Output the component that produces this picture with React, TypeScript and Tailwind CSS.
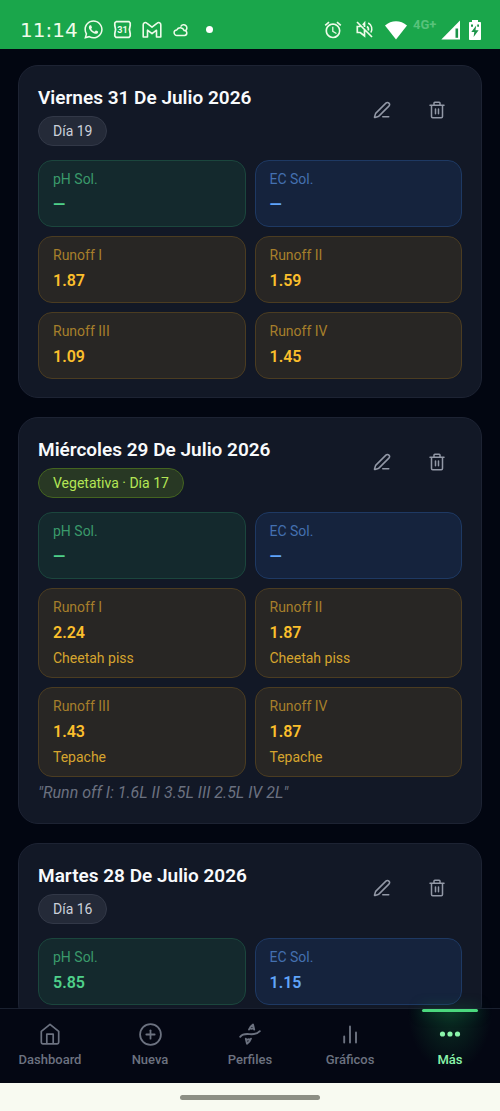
import React from 'react';
import { FaWhatsapp } from 'react-icons/fa';
import { MdAlarm } from 'react-icons/md';
import { CirclePlus, PenLine } from 'lucide-react';

type Tone = 'green' | 'blue' | 'amber';

interface Reading {
  label: string;
  value: string;
  tone: Tone;
  note?: string;
}

interface Entry {
  title: string;
  stage: string;
  vegetative?: boolean;
  readings: Reading[];
  comment?: string;
}

const entries: Entry[] = [
  {
    title: 'Viernes 31 De Julio 2026',
    stage: 'Día 19',
    readings: [
      { label: 'pH Sol.', value: '—', tone: 'green' },
      { label: 'EC Sol.', value: '—', tone: 'blue' },
      { label: 'Runoff I', value: '1.87', tone: 'amber' },
      { label: 'Runoff II', value: '1.59', tone: 'amber' },
      { label: 'Runoff III', value: '1.09', tone: 'amber' },
      { label: 'Runoff IV', value: '1.45', tone: 'amber' },
    ],
  },
  {
    title: 'Miércoles 29 De Julio 2026',
    stage: 'Vegetativa · Día 17',
    vegetative: true,
    readings: [
      { label: 'pH Sol.', value: '—', tone: 'green' },
      { label: 'EC Sol.', value: '—', tone: 'blue' },
      { label: 'Runoff I', value: '2.24', tone: 'amber', note: 'Cheetah piss' },
      { label: 'Runoff II', value: '1.87', tone: 'amber', note: 'Cheetah piss' },
      { label: 'Runoff III', value: '1.43', tone: 'amber', note: 'Tepache' },
      { label: 'Runoff IV', value: '1.87', tone: 'amber', note: 'Tepache' },
    ],
    comment: '"Runn off I: 1.6L II 3.5L III 2.5L IV 2L"',
  },
  {
    title: 'Martes 28 De Julio 2026',
    stage: 'Día 16',
    readings: [
      { label: 'pH Sol.', value: '5.85', tone: 'green' },
      { label: 'EC Sol.', value: '1.15', tone: 'blue' },
    ],
  },
];

const tones: Record<Tone, { box: string; label: string; value: string }> = {
  green: { box: 'border-[#1b463d] bg-[#14292d]', label: 'text-[#3a9a6b]', value: 'text-[#4fd08a]' },
  blue: { box: 'border-[#1e3963] bg-[#15233d]', label: 'text-[#4470b0]', value: 'text-[#60a5fa]' },
  amber: { box: 'border-[#4b3c21] bg-[#282624]', label: 'text-[#a67f2b]', value: 'text-[#fbbf2c]' },
};

function TrashIcon() {
  return (
    <svg width="20" height="20" viewBox="0 0 20 20" fill="none" stroke="currentColor" strokeWidth="1.5" strokeLinejoin="round" strokeLinecap="round" aria-hidden="true">
      <path d="M3 5.300h14M4.500 5.300v11.200c0 .8.4 1.200 1.200 1.200h8.600c.8 0 1.200-.4 1.200-1.200V5.300M7 5.300V3.100c0-.6.300-.9.9-.9h4.200c.6 0 .9.300.9.9v2.200M8.500 9v4.800M11.500 9v4.800" />
    </svg>
  );
}

function HomeIcon() {
  return (
    <svg width="24" height="24" viewBox="0 0 24 24" fill="none" stroke="currentColor" strokeWidth="1.700" strokeLinejoin="round" aria-hidden="true">
      <path d="M3.300 9.300 12 2.300l8.700 7v11c0 1-.5 1.500-1.500 1.500H4.800c-1 0-1.500-.5-1.500-1.500zM8.800 21.800v-9.600h6.400v9.600" />
    </svg>
  );
}

function StrainIcon() {
  return (
    <svg width="24" height="24" viewBox="0 0 24 24" fill="none" stroke="currentColor" strokeWidth="1.900" strokeLinecap="round" strokeLinejoin="round" aria-hidden="true">
      <path d="M2.200 14.800c2.600-3.400 6-3 9.300-2.700 4 .4 7.800-.1 10.300-2.900" />
      <path d="M11 7.600c.6-2 2-3.800 4-5.100l1.200 5M13 6.900l2.600-.6" />
      <path d="M13 16.600c-.6 2-2 3.800-4 5.100l-1.200-5M11 17.300l-2.600.6" />
    </svg>
  );
}

function ChartIcon() {
  return (
    <svg width="24" height="24" viewBox="0 0 24 24" fill="none" stroke="currentColor" strokeWidth="1.900" strokeLinecap="round" aria-hidden="true">
      <path d="M6.200 14.500v6M12 4.500v16M18 10.500v10" />
    </svg>
  );
}

function DotsIcon() {
  return (
    <svg width="24" height="24" viewBox="0 0 24 24" fill="currentColor" aria-hidden="true">
      <circle cx="4.500" cy="12" r="2.600" />
      <circle cx="12" cy="12" r="2.600" />
      <circle cx="19.500" cy="12" r="2.600" />
    </svg>
  );
}

function StatusBar() {
  return (
    <header className="flex h-[49px] shrink-0 items-center justify-between bg-[#1aa64b] pt-2.5 pr-[19px] pl-5 text-[#eefbe9]">
      <div className="flex items-center">
        <time className="w-[63px] font-['DejaVu_Sans',sans-serif] text-xl leading-6">11:14</time>
        <FaWhatsapp size={21} aria-hidden="true" />
        <svg className="ml-[9px]" width="19" height="19" viewBox="0 0 19 19" fill="none" stroke="currentColor" strokeWidth="1.700" aria-hidden="true">
          <path d="M3 1.700h13l1.200 1.300v3M17.200 13v3L16 17.300H3L1.800 16v-3M1.800 6V3L3 1.700M1.800 5.500 2.600 9.500 1.800 13.500M17.200 5.500l-.8 4 .8 4" />
          <text x="9.500" y="13" textAnchor="middle" fontSize="9" fontWeight="700" fontFamily="Roboto, sans-serif" fill="currentColor" stroke="none">31</text>
        </svg>
        <svg className="ml-2.5" width="20" height="18" viewBox="0 0 20 18" fill="none" stroke="currentColor" strokeWidth="1.600" strokeLinejoin="round" aria-hidden="true">
          <path d="M1.200 3.800C1.200 1.600 3.500 1 4.800 2.100L10 6.200l5.200-4.100c1.300-1.100 3.600-.5 3.600 1.700V16h-4.300V9.200L10 12.600 5.500 9.200V16H1.200z" />
        </svg>
        <svg className="ml-[11px]" width="17" height="16" viewBox="0 0 17 16" fill="none" stroke="currentColor" strokeWidth="1.500" strokeLinecap="round" strokeLinejoin="round" aria-hidden="true">
          <path d="M4 13.500a2.800 2.800 0 0 1-.2-5.600 4 4 0 0 1 7.300.6 2.500 2.500 0 0 1 .4 5zM8 4.200a3.200 3.200 0 1 1 4.600 4.300" />
        </svg>
        <span className="ml-4 size-[7px] rounded-full bg-white" />
      </div>
      <div className="flex items-center">
        <MdAlarm size={20} aria-hidden="true" />
        <svg className="ml-3" width="19" height="19" viewBox="0 0 19 19" fill="none" stroke="currentColor" strokeWidth="1.700" aria-hidden="true">
          <path d="M2 2l15 15M5.500 6.500H2.300v6h3L9.500 16V10M7.800 5 9.500 3v4M12 6.500c1.300 1 1.700 2.500 1.300 4M13.200 3c3.500 2 4.400 6 2.700 9.500" />
        </svg>
        <svg className="ml-2.5" width="24" height="20" viewBox="0 0 24 20" fill="white" aria-hidden="true">
          <path d="M12 19.500 1 5.500C7.200-.3 16.800-.3 23 5.500z" />
        </svg>
        <span className="mb-2.5 w-[33px] pl-[5px] text-[13px] leading-4 font-bold text-[#58c27b]">4G+</span>
        <svg width="20" height="20" viewBox="0 0 20 20" aria-hidden="true">
          <path d="M19 .5v19H.3z" fill="white" />
          <path d="M14.500 8.500h2.600v9.300h-2.600z" fill="#1c944a" />
        </svg>
        <svg className="ml-2" width="12" height="20" viewBox="0 0 12 20" aria-hidden="true">
          <path d="M3 0h6v2h2c.7 0 1 .4 1 1v16c0 .6-.4 1-1 1H1c-.6 0-1-.4-1-1V3c0-.6.4-1 1-1h2z" fill="white" />
          <path d="M7.200 5.500 2.300 12h3l-.7 5 5-6.800H6.500zM2 4.500h2v2.300H2zM8.200 4.500H10v2.300H8.200z" fill="#1c944a" />
        </svg>
      </div>
    </header>
  );
}

function ReadingTile({ label, value, tone, note }: Reading) {
  const t = tones[tone];
  return (
    <div className={`rounded-[14px] border px-3.5 pt-2 pb-[9px] ${t.box}`}>
      <dt className={`text-sm leading-5 ${t.label}`}>{label}</dt>
      <dd className={`mt-1 text-base leading-6 font-semibold ${t.value}`}>{value}</dd>
      {note && <dd className="mt-[3px] text-sm leading-5 text-[#d6a42e]">{note}</dd>}
    </div>
  );
}

function EntryCard({ entry }: { entry: Entry }) {
  return (
    <article className="rounded-[20px] border border-[#1d2333] bg-[#121826] px-[19px] pt-[19px] pb-[18px]">
      <div className="flex items-start justify-between">
        <div>
          <h2 className="text-[19px] leading-[26px] font-semibold text-[#f8fafc]">{entry.title}</h2>
          <span
            className={`mt-[5px] inline-block rounded-full border px-3.5 py-1 text-sm leading-[20px] ${
              entry.vegetative ? 'border-[#446420] bg-[#283824] text-[#b4e655]' : 'border-[#323847] bg-[#242a38] text-[#cbd0da]'
            }`}
          >
            {entry.stage}
          </span>
        </div>
        <div className="flex gap-[5px] text-[#9298a6]">
          <button type="button" aria-label="Editar" className="grid size-[50px] place-items-center">
            <PenLine size={18} strokeWidth={2} />
          </button>
          <button type="button" aria-label="Eliminar" className="grid size-[50px] place-items-center">
            <TrashIcon />
          </button>
        </div>
      </div>
      <dl className="mt-3.5 grid grid-cols-2 gap-[9px]">
        {entry.readings.map((r) => (
          <ReadingTile key={r.label} {...r} />
        ))}
      </dl>
      {entry.comment && <p className="mt-[3px] text-base leading-[25px] text-[#6b7180] italic">{entry.comment}</p>}
    </article>
  );
}

const tabs = [
  { label: 'Dashboard', icon: <HomeIcon /> },
  { label: 'Nueva', icon: <CirclePlus size={25} strokeWidth={1.7} /> },
  { label: 'Perfiles', icon: <StrainIcon /> },
  { label: 'Gráficos', icon: <ChartIcon /> },
  { label: 'Más', icon: <DotsIcon />, active: true },
];

function TabBar() {
  return (
    <nav className="grid h-[75px] shrink-0 grid-cols-5 border-t border-[#1a2130] bg-[#040713]">
      {tabs.map((tab) => (
        <a
          key={tab.label}
          href="#"
          aria-current={tab.active ? 'page' : undefined}
          className={`relative flex flex-col items-center pt-[13px] text-[13px] font-medium ${
            tab.active ? 'bg-radial-[at_50%_0%] from-[#0a3023] to-[#040713] to-60% text-[#8bf5ab]' : 'text-[#6c7280]'
          }`}
        >
          {tab.active && (
            <span className="absolute top-0 h-[3px] w-14 rounded-full bg-[#4bd87d] shadow-[0_0_14px_0px_#1b9b4e99]" />
          )}
          <span className="grid h-6 place-items-center">{tab.icon}</span>
          <span className="mt-1 leading-5">{tab.label}</span>
        </a>
      ))}
    </nav>
  );
}

export default function App() {
  return (
    <div className="flex h-screen flex-col bg-[#020611] font-[Roboto,sans-serif]">
      <StatusBar />
      <main className="flex min-h-0 flex-1 flex-col gap-[19px] overflow-y-auto px-[18px] pt-4 [scrollbar-width:none] [&>*]:shrink-0">
        {entries.map((entry) => (
          <EntryCard key={entry.title} entry={entry} />
        ))}
      </main>
      <TabBar />
      <footer className="flex h-7 shrink-0 items-center justify-center bg-[#f8faf1]">
        <span className="h-[5px] w-[140px] rounded-full bg-[#8d8f85]" />
      </footer>
    </div>
  );
}
